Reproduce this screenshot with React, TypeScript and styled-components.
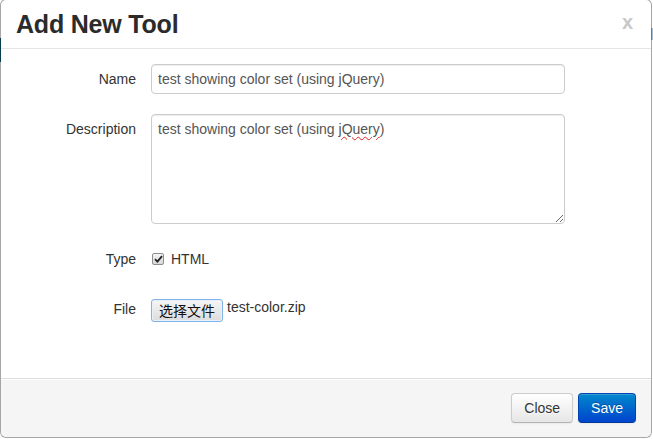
import React from "react";
import styled, { createGlobalStyle } from "styled-components";

const Global = createGlobalStyle`
  html, body { margin: 0; padding: 0; background: #ffffff; }
  body { font-family: "Liberation Sans", Arial, Helvetica, sans-serif; font-size: 14px; color: #333; }
  * { box-sizing: border-box; }
`;

const Page = styled.div`
  position: relative;
  width: 653px;
  height: 439px;
  overflow: hidden;
  background: #ffffff;
`;

const PeekLeft = styled.div`
  position: absolute;
  left: 0;
  top: 38px;
  width: 1px;
  height: 24px;
  background: #0b5e7a;
`;

const PeekRight = styled.div`
  position: absolute;
  left: 651px;
  top: 28px;
  width: 2px;
  height: 12px;
  background: #9cc0dc;
`;

const Modal = styled.div`
  position: relative;
  width: 652px;
  height: 439px;
  margin-top: -1px;
  display: flex;
  flex-direction: column;
  background: #fff;
  border: 1px solid rgba(0, 0, 0, 0.35);
  border-radius: 6px;
  background-clip: padding-box;
`;

const Header = styled.div`
  height: 49px;
  display: flex;
  align-items: center;
  justify-content: space-between;
  padding: 0 18px 0 15px;
  border-bottom: 1px solid #e5e5e5;
`;

const Title = styled.h3`
  margin: 0;
  font-size: 25px;
  font-weight: bold;
  color: #2b2b2b;
  letter-spacing: -0.2px;
  line-height: 30px;
`;

const CloseX = styled.button`
  border: 0;
  background: none;
  padding: 0;
  margin-top: -4px;
  font-family: "Liberation Sans", Arial, sans-serif;
  font-size: 20px;
  font-weight: bold;
  color: #c8c8c8;
  line-height: 20px;
  cursor: pointer;
`;

const Body = styled.div`
  flex: 1;
  padding-top: 15px;
`;

const Form = styled.div`
  display: grid;
  grid-template-columns: 135px 414px;
  column-gap: 15px;
  row-gap: 20px;
  align-items: start;
`;

const Label = styled.label<{ $h: number }>`
  height: ${(p) => p.$h}px;
  line-height: 30px;
  text-align: right;
  color: #333;
  font-size: 14px;
`;

const TextInput = styled.input`
  width: 414px;
  height: 30px;
  padding: 4px 6px;
  font-family: "Liberation Sans", Arial, sans-serif;
  font-size: 14px;
  color: #555;
  border: 1px solid #ccc;
  border-radius: 4px;
  box-shadow: inset 0 1px 1px rgba(0, 0, 0, 0.075);
  outline: none;
`;

const TextArea = styled.div`
  width: 414px;
  height: 110px;
  padding: 4px 6px;
  font-size: 14px;
  line-height: 20px;
  color: #555;
  border: 1px solid #ccc;
  border-radius: 4px;
  box-shadow: inset 0 1px 1px rgba(0, 0, 0, 0.075);
  overflow: auto;
  resize: both;
`;

const Misspelled = styled.span`
  text-decoration: underline wavy #e02020;
  text-decoration-thickness: 1px;
  text-underline-offset: 2px;
`;

const Controls = styled.div`
  height: 30px;
  display: flex;
  align-items: center;
  gap: 7px;
`;

const CheckBox = styled.span`
  width: 12px;
  height: 12px;
  margin-left: 1px;
  display: inline-flex;
  align-items: center;
  justify-content: center;
  border: 1px solid #8e8e8e;
  border-radius: 2px;
  background: linear-gradient(#f4f4f4, #d8d8d8);
`;

const CheckText = styled.span`
  font-size: 14px;
  color: #333;
`;

const FileRow = styled.div`
  height: 30px;
  display: flex;
  align-items: flex-start;
  padding-top: 5px;
  gap: 4px;
`;

const FileButton = styled.button`
  width: 72px;
  height: 23px;
  padding: 0;
  font-family: "Noto Sans CJK SC", "Liberation Sans", sans-serif;
  font-size: 14px;
  line-height: 19px;
  color: #111;
  border: 1px solid #7eb4ea;
  border-radius: 3px;
  background: linear-gradient(#f6f6f6, #dcdcdc);
  box-shadow: inset 0 0 0 1px #e8f1fb;
`;

const FileName = styled.span`
  font-size: 14px;
  line-height: 16px;
  color: #333;
`;

const Footer = styled.div`
  height: 59px;
  display: flex;
  justify-content: flex-end;
  align-items: flex-start;
  gap: 5px;
  padding: 14px 15px 0 0;
  background: #f5f5f5;
  border-top: 1px solid #ddd;
  border-radius: 0 0 6px 6px;
  box-shadow: inset 0 1px 0 #fff;
`;

const Btn = styled.button<{ $primary?: boolean }>`
  height: 30px;
  padding: 4px 12px;
  font-family: "Liberation Sans", Arial, sans-serif;
  font-size: 14px;
  line-height: 20px;
  border-radius: 4px;
  cursor: pointer;
  color: ${(p) => (p.$primary ? "#fff" : "#333")};
  text-shadow: ${(p) =>
    p.$primary ? "0 -1px 0 rgba(0,0,0,0.25)" : "0 1px 1px rgba(255,255,255,0.75)"};
  border: 1px solid ${(p) => (p.$primary ? "#0044b3" : "#cccccc")};
  border-bottom-color: ${(p) => (p.$primary ? "#003a99" : "#b3b3b3")};
  background: ${(p) =>
    p.$primary
      ? "linear-gradient(#0088cc, #0044cc)"
      : "linear-gradient(#ffffff, #e6e6e6)"};
  box-shadow: inset 0 1px 0 rgba(255, 255, 255, 0.2), 0 1px 2px rgba(0, 0, 0, 0.05);
`;

export default function App() {
  return (
    <>
      <Global />
      <Page>
        <PeekLeft />
        <PeekRight />
        <Modal>
          <Header>
            <Title>Add New Tool</Title>
            <CloseX aria-label="close">x</CloseX>
          </Header>
          <Body>
            <Form>
              <Label $h={30}>Name</Label>
              <TextInput defaultValue="test showing color set (using jQuery)" spellCheck={false} />
              <Label $h={30}>Description</Label>
              <TextArea role="textbox" aria-multiline="true">
                test showing color set (using <Misspelled>jQuery</Misspelled>)
              </TextArea>
              <Label $h={30}>Type</Label>
              <Controls>
                <CheckBox role="checkbox" aria-checked="true">
                  <svg width="9" height="8" viewBox="0 0 9 8">
                    <path d="M1 4.2 L3.4 6.6 L8 1.2" fill="none" stroke="#222" strokeWidth="1.8" />
                  </svg>
                </CheckBox>
                <CheckText>HTML</CheckText>
              </Controls>
              <Label $h={30}>File</Label>
              <FileRow>
                <FileButton>选择文件</FileButton>
                <FileName>test-color.zip</FileName>
              </FileRow>
            </Form>
          </Body>
          <Footer>
            <Btn>Close</Btn>
            <Btn $primary>Save</Btn>
          </Footer>
        </Modal>
      </Page>
    </>
  );
}
